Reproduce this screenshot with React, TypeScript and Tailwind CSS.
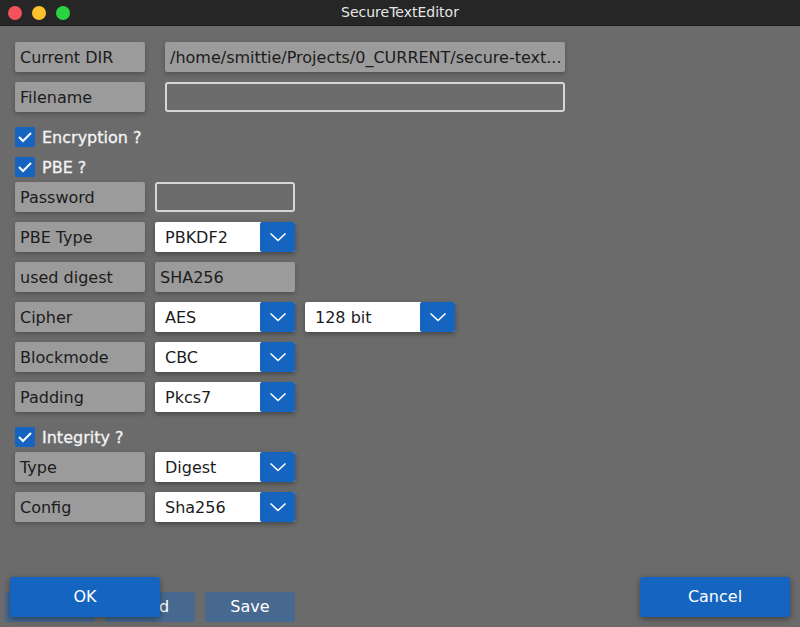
import React from 'react';

const font = { fontFamily: '"DejaVu Sans", sans-serif' };

function Label({ text }: { text: string }) {
  return (
    <div className="w-[130px] h-[30px] shrink-0 rounded-[2px] bg-[#9b9b9b] shadow-[0_2px_4px_rgba(0,0,0,0.25)] px-[5px] pt-[1px] flex items-center text-[16px] text-[#1c1c1c]">
      {text}
    </div>
  );
}

function Chevron() {
  return (
    <svg width="18" height="10" viewBox="0 0 18 10" fill="none">
      <path d="M1.5 1.5 L9 8.5 L16.5 1.5" stroke="white" strokeWidth="1.6" />
    </svg>
  );
}

function Select({ value, width = 140 }: { value: string; width?: number }) {
  return (
    <div
      className="h-[30px] shrink-0 flex rounded-[2px] bg-white shadow-[0_2px_5px_rgba(0,0,0,0.35)]"
      style={{ width }}
    >
      <div className="flex-1 flex items-center pl-[10px] pt-[1px] text-[16px] text-[#1c1c1c]">{value}</div>
      <div className="w-[35px] flex items-center justify-center rounded-[2px] bg-[#1565c0]">
        <Chevron />
      </div>
    </div>
  );
}

function Check({ text }: { text: string }) {
  return (
    <div className="h-[20px] flex items-center gap-[7px] ml-[15px]">
      <div className="w-[20px] h-[20px] rounded-[2px] bg-[#1565c0] flex items-center justify-center">
        <svg width="16" height="12" viewBox="0 0 16 12" fill="none">
          <path d="M2 6 L6 10 L14 2" stroke="white" strokeWidth="2" />
        </svg>
      </div>
      <span className="text-[16px] text-[#f4f4f4] pt-[1px] [-webkit-text-stroke:0.3px_#f4f4f4]">{text}</span>
    </div>
  );
}

function Row({ label, children }: { label: string; children?: React.ReactNode }) {
  return (
    <div className="flex items-center gap-[10px] ml-[15px]">
      <Label text={label} />
      {children}
    </div>
  );
}

export default function App() {
  return (
    <div className="w-[800px] h-[627px] bg-[#6b6b6b] relative overflow-hidden" style={font}>
      {/* Titelleiste */}
      <div className="h-[26px] bg-[#262626] border-b border-[#1a1a1a] flex items-center relative">
        <div className="flex gap-[10px] ml-[8px]">
          <div className="w-[14px] h-[14px] rounded-full bg-[#f3525a]" />
          <div className="w-[14px] h-[14px] rounded-full bg-[#fcc22e]" />
          <div className="w-[14px] h-[14px] rounded-full bg-[#2ad441]" />
        </div>
        <div className="absolute inset-0 flex items-center justify-center text-[14px] text-[#e6e6e6]">
          SecureTextEditor
        </div>
      </div>

      <div className="flex flex-col pt-[16px]">
        <div className="flex items-center gap-[20px] ml-[15px]">
          <Label text="Current DIR" />
          <div className="w-[400px] h-[30px] rounded-[2px] bg-[#9b9b9b] shadow-[0_2px_4px_rgba(0,0,0,0.25)] px-[5px] pt-[1px] flex items-center whitespace-nowrap overflow-hidden text-[16px] text-[#1c1c1c]">
            /home/smittie/Projects/0_CURRENT/secure-text...
          </div>
        </div>
        <div className="flex items-center gap-[20px] ml-[15px] mt-[10px]">
          <Label text="Filename" />
          <div className="w-[400px] h-[30px] rounded-[3px] border-2 border-[#d6d6d6]" />
        </div>

        <div className="mt-[15px]"><Check text="Encryption ?" /></div>
        <div className="mt-[10px]"><Check text="PBE ?" /></div>

        <div className="mt-[5px] flex flex-col gap-[10px]">
          <Row label="Password">
            <div className="w-[140px] h-[30px] rounded-[3px] border-2 border-[#d6d6d6]" />
          </Row>
          <Row label="PBE Type"><Select value="PBKDF2" /></Row>
          <Row label="used digest">
            <div className="w-[140px] h-[30px] rounded-[2px] bg-[#9b9b9b] shadow-[0_2px_4px_rgba(0,0,0,0.25)] pl-[5px] pt-[1px] flex items-center text-[16px] text-[#1c1c1c]">
              SHA256
            </div>
          </Row>
          <Row label="Cipher">
            <Select value="AES" />
            <Select value="128 bit" width={150} />
          </Row>
          <Row label="Blockmode"><Select value="CBC" /></Row>
          <Row label="Padding"><Select value="Pkcs7" /></Row>
        </div>

        <div className="mt-[15px]"><Check text="Integrity ?" /></div>

        <div className="mt-[5px] flex flex-col gap-[10px]">
          <Row label="Type"><Select value="Digest" /></Row>
          <Row label="Config"><Select value="Sha256" /></Row>
        </div>
      </div>

      {/* hintere Toolbar-Buttons, vom Dialog verdeckt */}
      <div className="absolute left-[5px] top-[592px] flex gap-[10px]">
        <div className="w-[90px] h-[30px] rounded-[2px] bg-[#47698f]" />
        <div className="w-[90px] h-[30px] rounded-[2px] bg-[#47698f] flex items-center justify-center text-[16px] text-white">Load</div>
        <div className="w-[90px] h-[30px] rounded-[2px] bg-[#47698f] flex items-center justify-center text-[16px] text-white">Save</div>
      </div>

      <button className="absolute left-[10px] top-[577px] w-[150px] h-[40px] rounded-[3px] bg-[#1565c0] shadow-[0_2px_6px_rgba(0,0,0,0.4)] text-[16px] text-white">
        OK
      </button>
      <button className="absolute left-[640px] top-[577px] w-[150px] h-[40px] rounded-[3px] bg-[#1565c0] shadow-[0_2px_6px_rgba(0,0,0,0.4)] text-[16px] text-white">
        Cancel
      </button>
    </div>
  );
}
